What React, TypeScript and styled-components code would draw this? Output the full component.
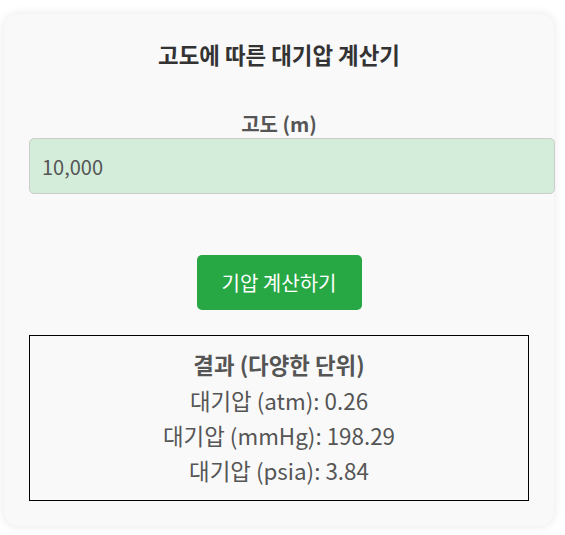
import React, { useState } from 'react';
import styled, { createGlobalStyle } from 'styled-components';

const GlobalStyle = createGlobalStyle`
  body {
    margin: 0;
    background: #ffffff;
    font-family: "Noto Sans CJK KR", "Noto Sans", sans-serif;
  }
`;

const Page = styled.div`
  padding: 14px 11px 8px 4px;
`;

const Card = styled.div`
  width: 500px;
  padding: 25px;
  background: #f9f9f9;
  border-radius: 14px;
  box-shadow: 0 0 10px rgba(0, 0, 0, 0.1);
`;

const Title = styled.h2`
  margin: 0 0 41px;
  font-size: 22.4px;
  line-height: 30px;
  font-weight: 700;
  color: #333;
  text-align: center;
`;

const Label = styled.label`
  display: block;
  margin-bottom: 0;
  font-size: 20px;
  line-height: 28px;
  font-weight: 700;
  color: #555;
  text-align: center;
`;

const Input = styled.input`
  display: block;
  width: 100%;
  height: 54px;
  padding: 0 12px;
  margin: 0 0 61px;
  font-family: inherit;
  font-size: 20px;
  color: #555;
  background: #d4edda;
  border: 1px solid #ccc;
  border-radius: 5px;
  outline: none;
`;

const ButtonRow = styled.div`
  display: flex;
  justify-content: center;
  margin-bottom: 25px;
`;

const Button = styled.button`
  width: 165px;
  height: 55px;
  padding: 0;
  font-family: inherit;
  font-size: 20px;
  color: #fff;
  background: #28a745;
  border: none;
  border-radius: 5px;
  cursor: pointer;
`;

const ResultBox = styled.div`
  border: 1px solid #000;
  padding: 14px 15px 12px;
  text-align: center;
  color: #555;
`;

const ResultTitle = styled.div`
  margin-bottom: 5px;
  font-size: 22.4px;
  line-height: 28px;
  font-weight: 700;
`;

const ResultLine = styled.div`
  font-size: 22.4px;
  line-height: 35px;
`;

export default function App() {
  const [altitude, setAltitude] = useState('10,000');

  const results = [
    { unit: 'atm', value: '0.26' },
    { unit: 'mmHg', value: '198.29' },
    { unit: 'psia', value: '3.84' }
  ];

  return (
    <Page>
      <GlobalStyle />
      <Card>
        <Title>고도에 따른 대기압 계산기</Title>
        <Label htmlFor="altitude">고도 (m)</Label>
        <Input id="altitude" value={altitude} onChange={(e) => setAltitude(e.target.value)} />
        <ButtonRow>
          <Button>기압 계산하기</Button>
        </ButtonRow>
        <ResultBox>
          <ResultTitle>결과 (다양한 단위)</ResultTitle>
          {results.map((r) => (
            <ResultLine key={r.unit}>
              대기압 ({r.unit}): {r.value}
            </ResultLine>
          ))}
        </ResultBox>
      </Card>
    </Page>
  );
}
